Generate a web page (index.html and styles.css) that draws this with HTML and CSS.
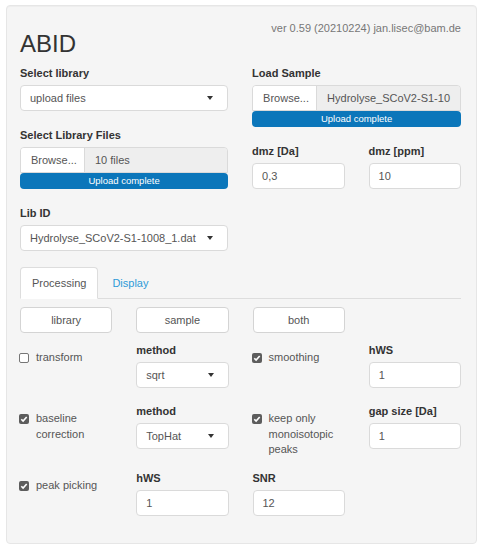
FILE: index.html
```html
<!DOCTYPE html>
<html>
<head>
<meta charset="utf-8">
<link rel="stylesheet" href="styles.css">
</head>
<body>
<div class="panel">
  <div class="version">ver 0.59 (20210224) jan.lisec@bam.de</div>
  <h2 class="title">ABID</h2>
  <div class="top">
    <div class="col">
      <div class="group">
        <label class="lbl">Select library</label>
        <div class="select"><span>upload files</span><span class="caret"></span></div>
      </div>
      <div class="group">
        <label class="lbl">Select Library Files</label>
        <div class="file"><span class="browse">Browse...</span><span class="fname">10 files</span></div>
        <div class="progress">Upload complete</div>
      </div>
      <div class="group">
        <label class="lbl">Lib ID</label>
        <div class="select"><span>Hydrolyse_SCoV2-S1-1008_1.dat</span><span class="caret"></span></div>
      </div>
    </div>
    <div class="col">
      <div class="group">
        <label class="lbl">Load Sample</label>
        <div class="file"><span class="browse">Browse...</span><span class="fname">Hydrolyse_SCoV2-S1-10</span></div>
        <div class="progress">Upload complete</div>
      </div>
      <div class="pair">
        <div class="field-top">
          <label class="lbl">dmz [Da]</label>
          <div class="input">0,3</div>
        </div>
        <div class="field-top">
          <label class="lbl">dmz [ppm]</label>
          <div class="input">10</div>
        </div>
      </div>
    </div>
  </div>

  <div class="tabs">
    <span class="tab active">Processing</span>
    <span class="tab link">Display</span>
  </div>

  <div class="btnrow">
    <div class="btn">library</div>
    <div class="btn">sample</div>
    <div class="btn">both</div>
  </div>

  <div class="grid4">
    <div class="check"><span class="box"></span><span class="ctext">transform</span></div>
    <div class="field">
      <label class="lbl">method</label>
      <div class="select"><span>sqrt</span><span class="caret"></span></div>
    </div>
    <div class="check"><span class="box on"><svg viewBox="0 0 10 10" width="10" height="10"><polyline points="2.3,5.2 4.1,7.1 7.7,2.9" fill="none" stroke="#fff" stroke-width="1.6"/></svg></span><span class="ctext">smoothing</span></div>
    <div class="field">
      <label class="lbl">hWS</label>
      <div class="input">1</div>
    </div>

    <div class="check"><span class="box on"><svg viewBox="0 0 10 10" width="10" height="10"><polyline points="2.3,5.2 4.1,7.1 7.7,2.9" fill="none" stroke="#fff" stroke-width="1.6"/></svg></span><span class="ctext">baseline correction</span></div>
    <div class="field">
      <label class="lbl">method</label>
      <div class="select"><span>TopHat</span><span class="caret"></span></div>
    </div>
    <div class="check"><span class="box on"><svg viewBox="0 0 10 10" width="10" height="10"><polyline points="2.3,5.2 4.1,7.1 7.7,2.9" fill="none" stroke="#fff" stroke-width="1.6"/></svg></span><span class="ctext">keep only monoisotopic peaks</span></div>
    <div class="field">
      <label class="lbl">gap size [Da]</label>
      <div class="input">1</div>
    </div>

    <div class="check"><span class="box on"><svg viewBox="0 0 10 10" width="10" height="10"><polyline points="2.3,5.2 4.1,7.1 7.7,2.9" fill="none" stroke="#fff" stroke-width="1.6"/></svg></span><span class="ctext">peak picking</span></div>
    <div class="field">
      <label class="lbl">hWS</label>
      <div class="input">1</div>
    </div>
    <div class="field">
      <label class="lbl">SNR</label>
      <div class="input">12</div>
    </div>
    <div></div>
  </div>
</div>
</body>
</html>
```

FILE: styles.css
```css
html, body {
  margin: 0;
  padding: 0;
  background: #fff;
}
body {
  font-family: "Liberation Sans", Arial, sans-serif;
  font-size: 11px;
  color: #333;
}
.panel {
  box-sizing: border-box;
  width: 471px;
  margin: 5px 0 0 6px;
  padding: 16px 15px 12px 13px;
  background: #f5f5f5;
  border: 1px solid #e6e6e6;
  border-radius: 4px;
  box-shadow: inset 0 1px 1px rgba(0,0,0,0.03);
}
.version {
  text-align: right;
  font-size: 11px;
  line-height: 12px;
  color: #777;
}
.title {
  margin: -2px 0 9px 0;
  font-size: 24px;
  line-height: 24px;
  font-weight: normal;
  color: #333;
}
.top {
  display: grid;
  grid-template-columns: 1fr 1fr;
  column-gap: 24px;
  margin-bottom: 16px;
}
.group {
  margin-bottom: 16px;
}
.col > .group:last-child {
  margin-bottom: 0;
}
.lbl {
  display: block;
  font-weight: bold;
  line-height: 16px;
  margin-bottom: 4px;
  color: #333;
}
.select, .input {
  box-sizing: border-box;
  height: 26px;
  background: #fff;
  border: 1px solid #dadada;
  border-radius: 4px;
  color: #555;
  line-height: 24px;
  padding: 0 14px 0 9px;
  white-space: nowrap;
}
.select {
  display: flex;
  align-items: center;
  justify-content: space-between;
}
.caret {
  width: 0;
  height: 0;
  border-top: 4px solid #333;
  border-left: 3.5px solid transparent;
  border-right: 3.5px solid transparent;
  flex: none;
}
.file {
  box-sizing: border-box;
  height: 26px;
  display: flex;
  border: 1px solid #dadada;
  border-radius: 4px 4px 0 0;
  overflow: hidden;
  color: #555;
  line-height: 24px;
}
.browse {
  background: #fff;
  padding: 0 10px;
  border-right: 1px solid #dadada;
  width: 64px;
  box-sizing: border-box;
  flex: none;
}
.fname {
  flex: 1;
  background: #eee;
  padding: 0 10px;
  white-space: nowrap;
  overflow: hidden;
}
.progress {
  height: 16px;
  line-height: 16px;
  background: #0b76ba;
  color: #fff;
  font-size: 9.5px;
  text-align: center;
  border-radius: 4px;
}
.pair {
  display: grid;
  grid-template-columns: 1fr 1fr;
  column-gap: 24px;
}
.tabs {
  display: flex;
  gap: 2px;
  border-bottom: 1px solid #ddd;
}
.tab {
  padding: 7px 11px;
  line-height: 16px;
  border: 1px solid transparent;
  border-radius: 4px 4px 0 0;
  margin-bottom: -1px;
  color: #555;
}
.tab.active {
  background: #fff;
  border-color: #ddd #ddd transparent #ddd;
}
.tab.link {
  color: #2d9ad8;
}
.btnrow {
  display: grid;
  grid-template-columns: repeat(4, 1fr);
  column-gap: 24px;
  margin-top: 8px;
}
.btn {
  box-sizing: border-box;
  height: 26px;
  line-height: 24px;
  text-align: center;
  background: #fff;
  border: 1px solid #d4d4d4;
  border-radius: 4px;
  color: #555;
}
.grid4 {
  display: grid;
  grid-template-columns: repeat(4, 1fr);
  column-gap: 24px;
  align-items: start;
  margin-top: 9px;
}
.field {
  padding-bottom: 15px;
}
.check {
  display: flex;
  align-items: flex-start;
  gap: 7px;
  padding: 8px 0 12px 0;
  line-height: 15.5px;
  color: #555;
}
.box {
  box-sizing: border-box;
  flex: none;
  width: 10px;
  height: 10px;
  margin: 3px 0 0 -1px;
  border: 1px solid #767676;
  border-radius: 2px;
  background: #fff;
  display: flex;
}
.box.on {
  border: none;
  background: #5d5d5d;
}
.box svg {
  display: block;
}
```
